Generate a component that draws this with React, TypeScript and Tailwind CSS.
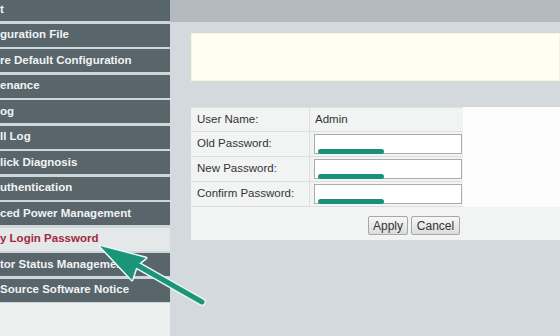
const menu = [
  "t",
  "guration File",
  "re Default Configuration",
  "enance",
  "og",
  "ll Log",
  "lick Diagnosis",
  "uthentication",
  "ced Power Management",
  "y Login Password",
  "tor Status Management",
  "Source Software Notice",
];

const fields = ["Old Password:", "New Password:", "Confirm Password:"];

const Arrow = () => (
  <svg className="absolute left-0 top-0 pointer-events-none" width="560" height="336">
    {/* white halo */}
    <line x1="137" y1="265" x2="202" y2="302" stroke="#eaf7f3" strokeWidth="8" strokeLinecap="round" />
    <polygon points="100,246 146,258 137,265 132,280" fill="#eaf7f3" stroke="#eaf7f3" strokeWidth="3" strokeLinejoin="round" />
    <line x1="137" y1="265" x2="202" y2="302" stroke="#1b957a" strokeWidth="5" strokeLinecap="round" />
    <polygon points="100,246 146,258 137,265 132,280" fill="#1b957a" />
  </svg>
);

export default function App() {
  return (
    <div className="relative w-[560px] h-[336px] overflow-hidden flex bg-[#d3d9dc] font-['Liberation_Sans',Arial,sans-serif]">
      <aside className="w-[170px] shrink-0 bg-[#eef0f0] flex flex-col">
        <div className="-mt-[2px] flex flex-col gap-[2.5px] bg-[#cfd6d9] pb-[1px]">
          {menu.map((m) =>
            m === "y Login Password" ? (
              <div key={m} className="h-[23px] flex items-center bg-[#e4e8e9] text-[#a3283d] text-[11.5px] font-bold whitespace-nowrap">
                {m}
              </div>
            ) : (
              <div key={m} className="h-[23px] flex items-center bg-[#58656b] text-[#f1f3f3] text-[11.5px] font-bold whitespace-nowrap overflow-hidden">
                {m}
              </div>
            )
          )}
        </div>
      </aside>

      <main className="flex-1 flex flex-col">
        <div className="h-[22px] bg-[#b3bbc1]" />
        <div className="ml-[21px] mt-[11px] h-[48px] bg-[#fefef2] border border-[#f5f5dc]" />

        <div className="ml-[21px] mt-[26px] bg-[#f2f3f3]">
          <div className="flex">
            <div className="w-[272px] border-t border-[#dfe2e3] text-[11.5px] text-[#333]">
              <div className="h-[24px] flex border-b border-[#dcdfe0]">
                <div className="w-[119px] pl-[6px] flex items-center border-r border-[#dcdfe0]">User Name:</div>
                <div className="pl-[5px] flex items-center">Admin</div>
              </div>
              {fields.map((f) => (
                <div key={f} className="h-[25px] flex border-b border-[#dcdfe0]">
                  <div className="w-[119px] pl-[6px] flex items-center border-r border-[#dcdfe0]">{f}</div>
                  <div className="flex-1 pl-[4px] pr-[1px] flex items-center">
                    <div className="relative w-full h-[20px] bg-white border border-[#ababab]">
                      <div className="absolute left-[3px] -bottom-[1px] w-[66px] h-[5px] rounded-full bg-[#1b9079]" />
                    </div>
                  </div>
                </div>
              ))}
            </div>
            <div className="flex-1 bg-[#fdfdfd]" />
          </div>
          <div className="h-[33px] flex justify-end items-start pt-[9px] pr-[100px] gap-[3px] text-[12px] text-[#333]">
            <button className="w-[40px] h-[19px] border border-[#a7a7a7] rounded-[2px] bg-gradient-to-b from-[#f7f7f7] to-[#dcdcdc]">Apply</button>
            <button className="w-[49px] h-[19px] border border-[#a7a7a7] rounded-[2px] bg-gradient-to-b from-[#f7f7f7] to-[#dcdcdc]">Cancel</button>
          </div>
        </div>
      </main>

      <Arrow />
    </div>
  );
}
